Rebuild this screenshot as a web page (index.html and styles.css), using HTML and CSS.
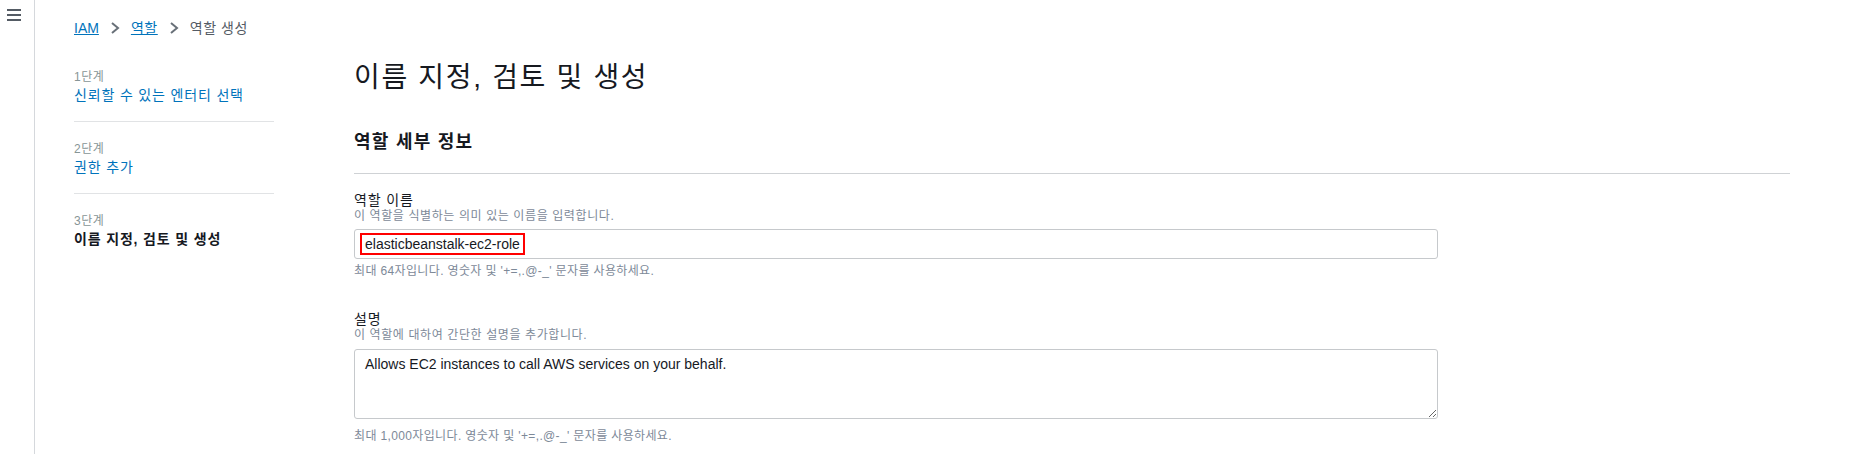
FILE: index.html
```html
<!DOCTYPE html>
<html lang="ko">
<head>
<meta charset="utf-8">
<title>역할 생성</title>
<link rel="stylesheet" href="styles.css">
</head>
<body>
<div class="page">
  <nav class="rail">
    <svg class="menu" width="14" height="12" viewBox="0 0 14 12"><rect x="0" y="0" width="14" height="2"/><rect x="0" y="5" width="14" height="2"/><rect x="0" y="10" width="14" height="2"/></svg>
  </nav>
  <div class="content">
    <div class="crumbs">
      <a class="link" href="#">IAM</a>
      <svg class="chev" width="10" height="12" viewBox="0 0 10 12"><path d="M2 1 L8 6 L2 11"/></svg>
      <a class="link ko" href="#">역할</a>
      <svg class="chev" width="10" height="12" viewBox="0 0 10 12"><path d="M2 1 L8 6 L2 11"/></svg>
      <span class="crumb-current ko">역할 생성</span>
    </div>
    <div class="layout">
      <ol class="steps">
        <li class="step">
          <div class="step-num">1단계</div>
          <a class="step-title" href="#">신뢰할 수 있는 엔터티 선택</a>
        </li>
        <li class="step">
          <div class="step-num">2단계</div>
          <a class="step-title" href="#">권한 추가</a>
        </li>
        <li class="step last">
          <div class="step-num">3단계</div>
          <div class="step-title current">이름 지정, 검토 및 생성</div>
        </li>
      </ol>
      <main class="main">
        <h1 class="title">이름 지정, 검토 및 생성</h1>
        <h2 class="section">역할 세부 정보</h2>
        <div class="field">
          <div class="label">역할 이름</div>
          <div class="desc">이 역할을 식별하는 의미 있는 이름을 입력합니다.</div>
          <div class="input"><span class="mark">elasticbeanstalk-ec2-role</span></div>
          <div class="hint">최대 64자입니다. 영숫자 및 '+=,.@-_' 문자를 사용하세요.</div>
        </div>
        <div class="field second">
          <div class="label">설명</div>
          <div class="desc">이 역할에 대하여 간단한 설명을 추가합니다.</div>
          <textarea class="area" readonly>Allows EC2 instances to call AWS services on your behalf.</textarea>
          <div class="hint hint-area">최대 1,000자입니다. 영숫자 및 '+=,.@-_' 문자를 사용하세요.</div>
        </div>
      </main>
    </div>
  </div>
</div>
</body>
</html>
```

FILE: styles.css
```css
html, body {
  margin: 0;
  padding: 0;
  background: #ffffff;
}
body {
  font-family: "Liberation Sans", "Noto Sans CJK KR", sans-serif;
  color: #16191f;
  font-size: 14px;
}
.page {
  display: flex;
  min-height: 100vh;
}
.rail {
  width: 34px;
  flex: none;
  border-right: 1px solid #d5d8dc;
  padding-top: 9px;
  box-sizing: content-box;
}
.menu {
  display: block;
  margin-left: 7px;
  fill: #545b64;
}
.content {
  flex: 1;
  padding-left: 39px;
}
.crumbs {
  display: flex;
  align-items: center;
  height: 20px;
  padding-top: 18px;
  line-height: 20px;
}
.ko {
  letter-spacing: 0.04em;
}
.link {
  color: #0073bb;
  text-decoration: underline;
}
.chev {
  display: block;
  margin: 0 11px 0 11px;
  fill: none;
  stroke: #687078;
  stroke-width: 2;
}
.crumb-current {
  color: #545b64;
}
.layout {
  display: flex;
  margin-top: 12px;
  gap: 80px;
}
.steps {
  list-style: none;
  margin: 0;
  padding: 0;
  width: 200px;
  flex: none;
}
.step {
  padding: 19px 0 16px;
  border-bottom: 1px solid #e1e3e5;
}
.step.last {
  border-bottom: none;
}
.step-num {
  font-size: 12px;
  line-height: 16px;
  color: #879596;
  letter-spacing: 0.04em;
}
.step-title {
  display: block;
  font-size: 14px;
  line-height: 20px;
  color: #0073bb;
  text-decoration: none;
  letter-spacing: 0.06em;
}
.step-title.current {
  color: #16191f;
  font-weight: 700;
}
.main {
  width: 1436px;
}
.title {
  margin: 10px 0 0;
  font-size: 28px;
  line-height: 36px;
  font-weight: 400;
  color: #16191f;
  letter-spacing: 0.06em;
}
.section {
  margin: 34px 0 0;
  padding-bottom: 19px;
  border-bottom: 1px solid #cfd2d5;
  font-size: 18px;
  line-height: 24px;
  font-weight: 700;
  color: #16191f;
  letter-spacing: 0.07em;
}
.field {
  margin-top: 18px;
}
.field.second {
  margin-top: 32px;
}
.label {
  font-size: 14px;
  line-height: 16px;
  color: #16191f;
  letter-spacing: 0.06em;
}
.desc {
  font-size: 12px;
  line-height: 16px;
  color: #7d8998;
  letter-spacing: 0.05em;
}
.input {
  margin-top: 5px;
  width: 1084px;
  height: 30px;
  box-sizing: border-box;
  border: 1px solid #c6c9cc;
  border-radius: 3px;
  padding-left: 5px;
  display: flex;
  align-items: center;
}
.mark {
  display: inline-block;
  border: 2px solid #ff0000;
  padding: 0 3px;
  line-height: 18px;
  font-size: 14px;
  color: #16191f;
}
.hint {
  margin-top: 4px;
  font-size: 12px;
  line-height: 16px;
  color: #7d8998;
  letter-spacing: 0.03em;
}
.hint-area {
  margin-top: 9px;
}
.area {
  display: block;
  margin-top: 6px;
  width: 1084px;
  height: 70px;
  box-sizing: border-box;
  border: 1px solid #c6c9cc;
  border-radius: 3px;
  padding: 4px 10px;
  font-family: "Liberation Sans", "Noto Sans CJK KR", sans-serif;
  font-size: 14px;
  line-height: 20px;
  color: #16191f;
  resize: vertical;
  outline: none;
}
```
